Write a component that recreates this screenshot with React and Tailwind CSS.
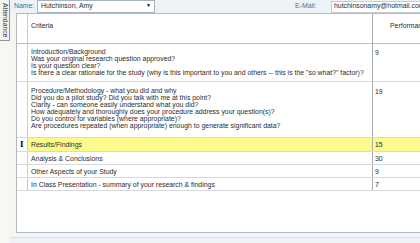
import React from 'react';

const rows = [
  {
    h: 'h-[38px]',
    pt: 'pt-[4px]',
    lines: [
      'Introduction/Background',
      'Was your original research question approved?',
      'Is your question clear?',
      'Is there a clear rationale for the study (why is this important to you and others -- this is the "so what?" factor)?',
    ],
    value: '9',
  },
  {
    h: 'h-[56px]',
    pt: 'pt-[5px]',
    lines: [
      'Procedure/Methodology - what you did and why',
      'Did you do a pilot study? Did you talk with me at this point?',
      'Clarity - can someone easily understand what you did?',
      'How adequately and thoroughly does your procedure address your question(s)?',
      'Do you control for variables (where appropriate)?',
      'Are procedures repeated (when appropriate) enough to generate significant data?',
    ],
    value: '19',
  },
  { h: 'h-[14px]', lines: ['Results/Findings'], value: '15', active: true },
  { h: 'h-[13px]', lines: ['Analysis & Conclusions'], value: '30' },
  { h: 'h-[13px]', lines: ['Other Aspects of your Study'], value: '9' },
  { h: 'h-[13px]', lines: ['In Class Presentation - summary of your research & findings'], value: '7' },
];

function GridRow({ row }) {
  const single = row.lines.length === 1;
  const bg = row.active ? 'bg-[#fbfb8c]' : 'bg-white';
  return (
    <div className={`flex ${row.h} border-b border-[#d6d9dc]`}>
      <div className='relative w-[11px] shrink-0 border-r border-[#c9ccd0] bg-white'>
        {row.active && (
          <span className='absolute left-[3px] top-[2px] text-[9px] leading-[9px] font-bold text-black font-["Liberation_Serif",serif]'>
            I
          </span>
        )}
      </div>
      <div
        className={`w-[344px] shrink-0 pl-[3px] ${bg} ${
          single ? 'flex items-center' : row.pt
        }`}
      >
        <div className='flex flex-col'>
          {row.lines.map((l, i) => (
            <span key={i} className='leading-[7px] h-[7px] whitespace-nowrap'>
              {l}
            </span>
          ))}
        </div>
      </div>
      <div
        className={`flex-1 border-l border-[#a9adb2] pl-[2px] ${bg} ${
          single ? 'flex items-center' : row.pt
        }`}
      >
        <span className='leading-[7px]'>{row.value}</span>
      </div>
    </div>
  );
}

export default function App() {
  return (
    <div className='w-[420px] h-[243px] overflow-hidden flex bg-[#f6f6f1] text-[6.9px] text-[#2b2b2b] font-["Liberation_Sans",Arial,sans-serif]'>
      <div className='w-[10px] shrink-0 flex flex-col'>
        <div className='h-[41px] border-r border-b border-[#8f959c] bg-[#f3f3f3] flex items-center justify-center'>
          <span className='[writing-mode:vertical-rl] text-[6.8px] text-[#333]'>Attendance</span>
        </div>
        <div className='flex-1 bg-[#f8f8f2]' />
      </div>

      <div className='flex-1 flex flex-col'>
        <div className='h-[13px] shrink-0 flex items-center bg-[#edf2f7] pl-[4px]'>
          <span className='w-[23px] text-[#4d6b93]'>Name:</span>
          <div className='w-[118px] h-[13px] -mt-[1px] flex items-center justify-between bg-white border border-[#a7b2bf] pl-[3px] pr-[3px]'>
            <span>Hutchinson, Amy</span>
            <span className='text-[5px] text-black'>▼</span>
          </div>
          <span className='ml-[140px] w-[36px] text-[#55708f]'>E-Mail:</span>
          <div className='flex-1 h-[12px] flex items-center bg-white border-l border-t border-b border-[#c3ccd6] pl-[2px] overflow-hidden'>
            <span className='whitespace-nowrap'>hutchinsonamy@hotmail.com</span>
          </div>
        </div>

        <div className='ml-[6px] h-[220px] shrink-0 flex flex-col bg-white border-l border-t border-b border-[#b3bac2] overflow-hidden'>
          <div className='flex h-[30px] shrink-0 border-b border-[#b8bcc1]'>
            <div className='w-[11px] shrink-0 border-r border-[#c9ccd0]' />
            <div className='w-[344px] shrink-0 pl-[3px] pt-[7px]'>Criteria</div>
            <div className='flex-1 border-l border-[#a9adb2] pl-[17px] pt-[7px] whitespace-nowrap overflow-hidden'>
              Performance
            </div>
          </div>
          {rows.map((r, i) => (
            <GridRow key={i} row={r} />
          ))}
          <div className='flex-1' />
        </div>

        <div className='flex-1 flex flex-col bg-[#f3f6f9]'>
          <div className='h-[4px]' />
          <div className='h-[1px] bg-[#d5dfe8]' />
          <div className='flex-1 bg-[#eef2f6]' />
        </div>
      </div>
    </div>
  );
}
